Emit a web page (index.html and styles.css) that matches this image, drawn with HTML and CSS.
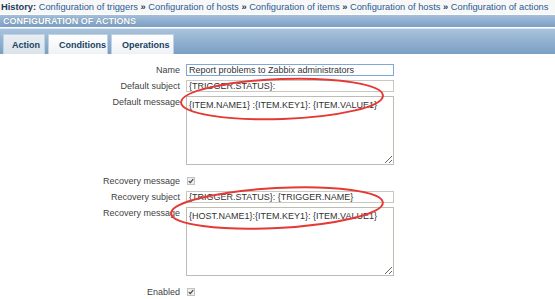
FILE: index.html
```html
<!DOCTYPE html>
<html lang="en">
<head>
  <meta charset="UTF-8" />
  <title>Configuration of actions</title>
  <link rel="stylesheet" href="styles.css">
</head>
<body>
  <div class="history">
    <b>History:</b>
    <a href="#">Configuration of triggers</a> <span class="sep">»</span>
    <a href="#">Configuration of hosts</a> <span class="sep">»</span>
    <a href="#">Configuration of items</a> <span class="sep">»</span>
    <a href="#">Configuration of hosts</a> <span class="sep">»</span>
    <a href="#">Configuration of actions</a>
  </div>

  <div class="header">CONFIGURATION OF ACTIONS</div>

  <div class="tabs">
    <a href="#" class="tab active">Action</a>
    <a href="#" class="tab">Conditions</a>
    <a href="#" class="tab">Operations</a>
  </div>

  <form class="form">
    <label class="lbl">Name</label>
    <input class="field focus" type="text" value="Report problems to Zabbix administrators">

    <label class="lbl">Default subject</label>
    <input class="field" type="text" value="{TRIGGER.STATUS}:">

    <label class="lbl">Default message</label>
    <textarea class="area">{ITEM.NAME1} :{ITEM.KEY1}: {ITEM.VALUE1}</textarea>

    <label class="lbl gap">Recovery message</label>
    <span class="check gap"><svg width="6" height="6" viewBox="0 0 6 6"><path d="M0.8 3.1 L2.3 4.6 L5.2 1.2" fill="none" stroke="#444" stroke-width="1.2"/></svg></span>

    <label class="lbl">Recovery subject</label>
    <input class="field" type="text" value="{TRIGGER.STATUS}: {TRIGGER.NAME}">

    <label class="lbl">Recovery message</label>
    <textarea class="area">{HOST.NAME1}:{ITEM.KEY1}: {ITEM.VALUE1}</textarea>

    <label class="lbl gap">Enabled</label>
    <span class="check gap"><svg width="6" height="6" viewBox="0 0 6 6"><path d="M0.8 3.1 L2.3 4.6 L5.2 1.2" fill="none" stroke="#444" stroke-width="1.2"/></svg></span>
  </form>

  <!-- red annotation marks drawn over the form -->
  <svg class="marks" width="555" height="299" viewBox="0 0 555 299">
    <ellipse cx="282" cy="99" rx="101" ry="20" transform="rotate(-2 282 99)" fill="none" stroke="#e53935" stroke-width="2"/>
    <ellipse cx="277" cy="208" rx="106" ry="20" transform="rotate(-3 277 208)" fill="none" stroke="#e53935" stroke-width="2"/>
  </svg>
</body>
</html>
```

FILE: styles.css
```css
html, body {
  margin: 0;
  padding: 0;
  background: white;
  font-family: "Liberation Sans", Arial, sans-serif;
  font-size: 9px;
  color: #333;
  position: relative;
  overflow: hidden;
}

.history {
  height: 14px;
  line-height: 14px;
  padding-left: 1px;
  white-space: nowrap;
  font-size: 9.3px;
  background: #f7f7f7;
  color: #1d3a5c;
}
.history b {
  color: #1d3a5c;
}
.history a {
  color: #2a5b94;
  text-decoration: none;
}
.history .sep {
  color: #1d3a5c;
  font-weight: bold;
}

.header {
  height: 12px;
  line-height: 12px;
  margin-top: 1px;
  padding-left: 3px;
  font-weight: bold;
  color: white;
  text-shadow: 0 0 1px #4d6f93;
  background: linear-gradient(#a4bfd9, #7b9fc4);
}

/* Tab strip */
.tabs {
  height: 22px;
  margin-top: 1px;
  padding: 3px 0 0 3px;
  display: flex;
  align-items: flex-end;
  gap: 3px;
  border-top: 1px solid #dbe6f0;
  background: linear-gradient(#a9c3dc, #7a9ec3);
  box-sizing: content-box;
}
.tab {
  height: 20px;
  line-height: 21px;
  padding: 0 10px;
  font-weight: bold;
  color: #203f63;
  text-decoration: none;
  background: linear-gradient(#ffffff, #eef2f6);
  border: 1px solid #c3d2e1;
  border-bottom: none;
  box-sizing: border-box;
}
.tab.active {
  width: 42px;
  padding: 0 0 0 8px;
  background: linear-gradient(#e9eef3, #d9e2ea);
}
.tab:nth-child(2) { width: 60px; }
.tab:nth-child(3) { width: 63px; }

/* Form */
.form {
  display: grid;
  grid-template-columns: 180px 208px;
  column-gap: 6px;
  row-gap: 4px;
  padding-top: 10px;
}
.lbl {
  text-align: right;
  line-height: 12px;
  color: #3f3f3f;
}
.field {
  height: 12px;
  margin: 0;
  padding: 0 2px;
  font-family: "Liberation Sans", Arial, sans-serif;
  font-size: 9px;
  color: #333;
  border: 1px solid #c9c9c1;
  background: white;
  box-sizing: border-box;
}
.field.focus {
  border-color: #7fa8d8;
}
.area {
  height: 69px;
  margin: 0;
  padding: 3px 2px;
  font-family: "Liberation Sans", Arial, sans-serif;
  font-size: 9px;
  color: #333;
  border: 1px solid #bebdb4;
  box-sizing: border-box;
  resize: both;
}
.gap {
  margin-top: 6px;
}
.check {
  width: 6px;
  height: 6px;
  margin-left: 1px;
  align-self: center;
  display: flex;
  border: 1px solid #c2c2c2;
  background: #eeeeee;
  box-sizing: content-box;
}
.check svg {
  display: block;
}

.marks {
  position: absolute;
  top: 0;
  left: 0;
  pointer-events: none;
}
```
